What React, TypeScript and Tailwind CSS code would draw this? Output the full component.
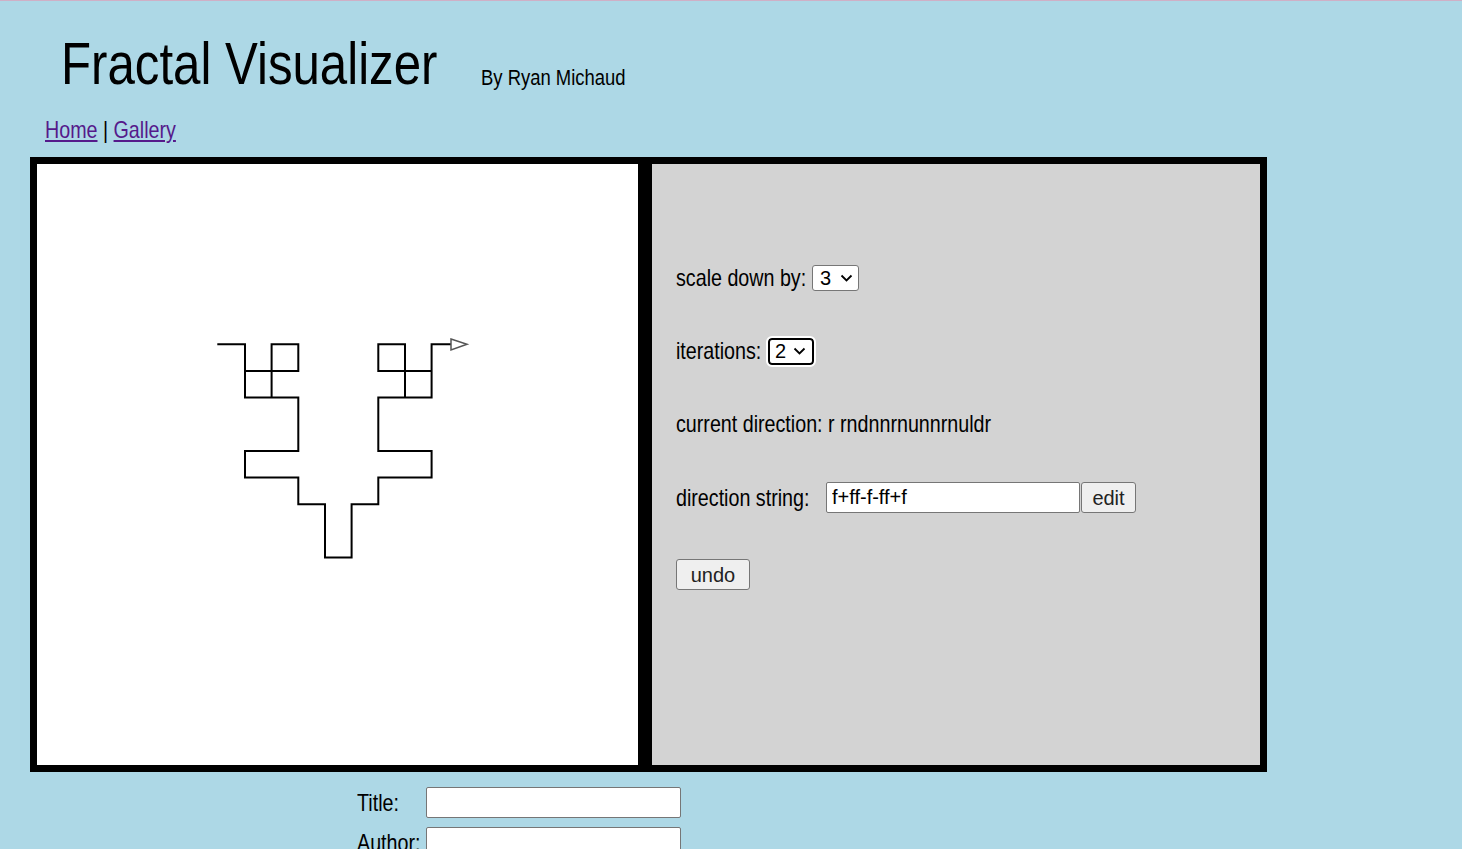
import React from "react";

const arial = { fontFamily: '"Liberation Sans", Arial, sans-serif' };

const S = 26.667;
const X0 = 181.3;
const Y0 = 180.3;

// fractal segments on the grid, [i1, j1, i2, j2]
const segs: number[][] = [
  [0, 0, 1, 0], [1, 0, 1, 2], [2, 0, 3, 0], [2, 0, 2, 2], [3, 0, 3, 1],
  [1, 1, 3, 1], [1, 2, 3, 2], [3, 2, 3, 4], [1, 4, 3, 4], [1, 4, 1, 5],
  [1, 5, 3, 5], [3, 5, 3, 6], [3, 6, 4, 6], [4, 6, 4, 8], [4, 8, 5, 8],
  [5, 6, 5, 8], [5, 6, 6, 6], [6, 5, 6, 6], [6, 5, 8, 5], [8, 4, 8, 5],
  [6, 4, 8, 4], [6, 2, 6, 4], [6, 2, 8, 2], [6, 0, 6, 1], [6, 0, 7, 0],
  [7, 0, 7, 2], [6, 1, 8, 1], [8, 0, 8, 2], [8, 0, 9, 0],
];

const px = (i: number) => X0 + i * S;
const py = (j: number) => Y0 + j * S;

function Fractal() {
  const d = segs
    .map(([a, b, c, e]) => `M${px(a).toFixed(1)} ${py(b).toFixed(1)}L${px(c).toFixed(1)} ${py(e).toFixed(1)}`)
    .join("");
  return (
    <svg width="601" height="601" viewBox="0 0 601 601">
      <path d={d} stroke="#000" strokeWidth="2" fill="none" strokeLinecap="square" />
      <polygon points="414,175 430,180.3 414,186" fill="#fff" stroke="#555" strokeWidth="1.5" />
    </svg>
  );
}

// condensed text (Arial Narrow look): Liberation Sans squeezed horizontally
function Narrow({ className = "", children }: { className?: string; children: React.ReactNode }) {
  return (
    <span className={"inline-block whitespace-nowrap " + className}>
      <span className="inline-block origin-left scale-x-[0.82]">{children}</span>
    </span>
  );
}

function Chevron() {
  return (
    <svg width="13" height="8" viewBox="0 0 13 8" className="pointer-events-none absolute">
      <polyline points="1.5,1.5 6.5,6.5 11.5,1.5" fill="none" stroke="#000" strokeWidth="1.8" />
    </svg>
  );
}

export default function App() {
  return (
    <div className="min-h-screen bg-[#add8e6] border-t border-[#cfb0c6] text-black" style={arial}>
      {/* header */}
      <div className="flex items-baseline pl-[61px] pt-[28px]">
        <h1 className="text-[60px] leading-[70px] font-normal">
          <Narrow className="w-[375px]">Fractal Visualizer</Narrow>
        </h1>
        <Narrow className="ml-[45px] w-[144px] text-[22.5px] relative top-[1px]">By Ryan Michaud</Narrow>
      </div>
      <div className="pl-[45px] pt-[18px] text-[24px] leading-[26px]">
        <Narrow>
          <a href="#" className="underline text-[#551a8b]">Home</a> |{" "}
          <a href="#" className="underline text-[#551a8b]">Gallery</a>
        </Narrow>
      </div>

      <div className="ml-[30px] mt-[14px] flex w-fit bg-black border-[7px] border-black">
        <div className="w-[601px] h-[601px] bg-white">
          <Fractal />
        </div>
        <div className="ml-[14px] w-[608px] h-[601px] bg-[#d3d3d3] pl-[24px] pt-[99px] text-[24px]">
          <div className="flex flex-col gap-[43px]">
            <div className="h-[30px] flex items-center">
              <Narrow className="w-[130px]">scale down by:</Narrow>
              <div className="relative ml-[6px] flex items-center">
                <select
                  defaultValue="3"
                  className="appearance-none w-[47px] h-[26px] bg-white border border-[#767676] rounded-[3px] text-[20px] leading-[24px] pl-[7px]"
                >
                  <option>1</option>
                  <option>2</option>
                  <option>3</option>
                </select>
                <span className="absolute left-[28px] top-[9px]">
                  <Chevron />
                </span>
              </div>
            </div>
            <div className="h-[30px] flex items-center">
              <Narrow className="w-[85px]">iterations:</Narrow>
              <div className="relative ml-[7px] flex items-center">
                <select
                  defaultValue="2"
                  className="appearance-none w-[46px] h-[27px] bg-white border-2 border-black rounded-[4px] outline-2 outline-white text-[20px] leading-[22px] pl-[5px]"
                >
                  <option>1</option>
                  <option>2</option>
                  <option>3</option>
                </select>
                <span className="absolute left-[25px] top-[9px]">
                  <Chevron />
                </span>
              </div>
            </div>
            <div className="h-[30px] flex items-center">
              <Narrow>current direction: r rndnnrnunnrnuldr</Narrow>
            </div>
            <div className="h-[31px] flex items-center">
              <Narrow className="w-[133px]">direction string:</Narrow>
              <input
                defaultValue="f+ff-f-ff+f"
                className="ml-[17px] w-[254px] h-[31px] bg-white border border-[#767676] rounded-[2px] px-[5px] text-[20px]"
              />
              <button className="ml-[1px] w-[55px] h-[31px] bg-[#efefef] border border-[#767676] rounded-[3px] text-[20px] text-[#222]">
                edit
              </button>
            </div>
            <div>
              <button className="w-[74px] h-[31px] bg-[#efefef] border border-[#767676] rounded-[3px] text-[20px] text-[#222]">
                undo
              </button>
            </div>
          </div>
        </div>
      </div>

      {/* save form */}
      <div className="pl-[357px] pt-[15px] grid grid-cols-[69px_255px] gap-y-[9px] items-center text-[24px] leading-[31px]">
        <Narrow>Title:</Narrow>
        <input className="h-[31px] bg-white border border-[#767676] rounded-[2px]" />
        <Narrow>Author:</Narrow>
        <input className="h-[31px] bg-white border border-[#767676] rounded-[2px]" />
      </div>
    </div>
  );
}
